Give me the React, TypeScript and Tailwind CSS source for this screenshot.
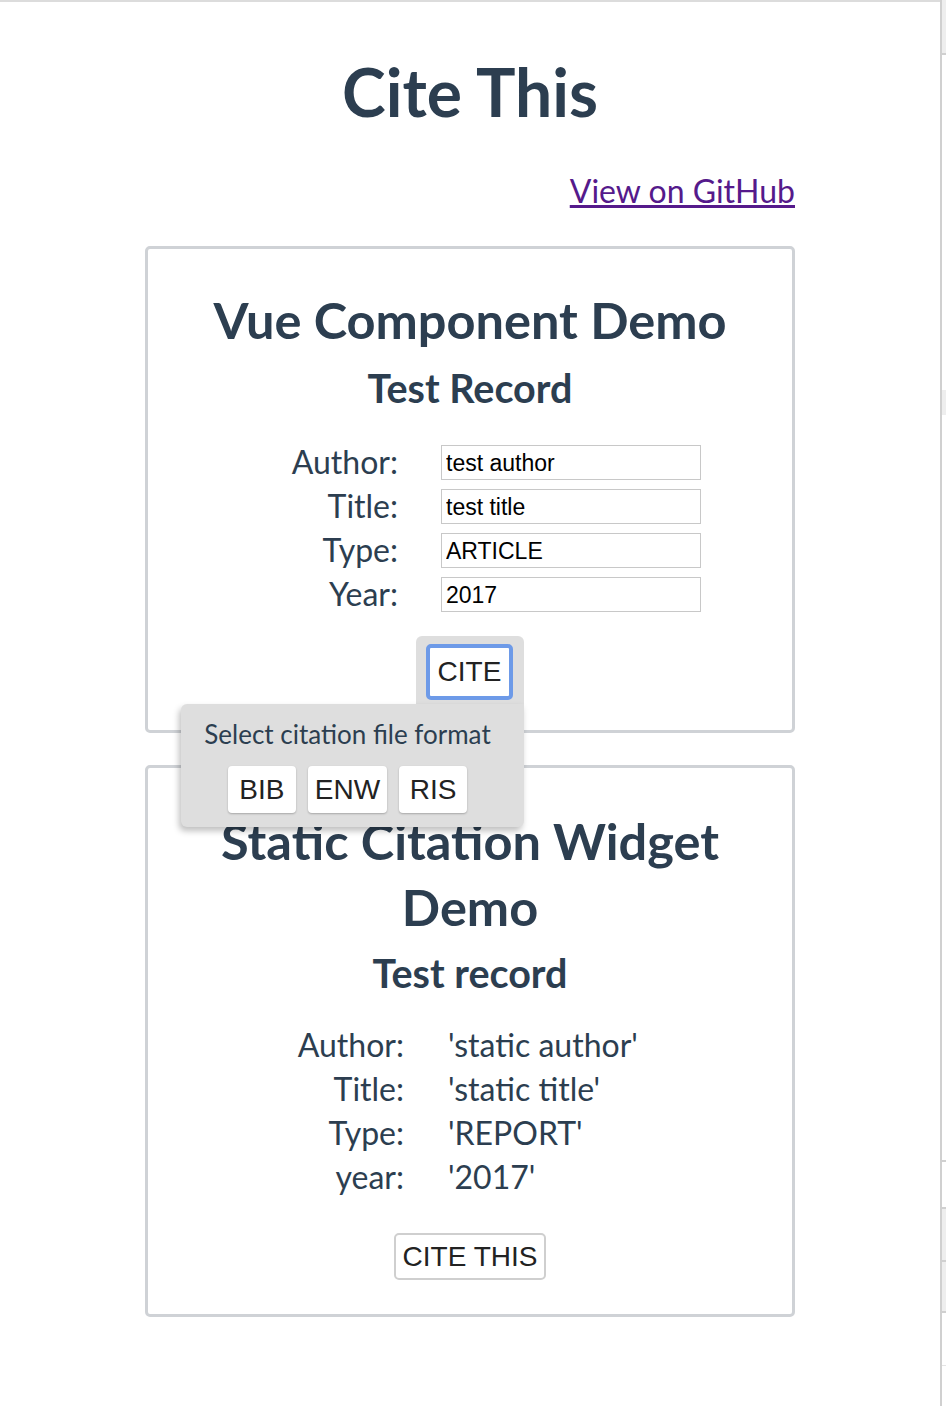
import React from "react";

const sans = "font-['Lato','Noto_Sans',sans-serif]";
const ui = "font-['Liberation_Sans','Arial',sans-serif]";

function Row({ label, children }: { label: string; children: React.ReactNode }) {
  return (
    <>
      <span className="text-right text-[32px] leading-[44px]">{label}</span>
      <div className="flex items-center">{children}</div>
    </>
  );
}

function CitePopup() {
  return (
    <div className="relative mt-[20px] flex justify-center">
      <div className="relative rounded-t-[6px] bg-[#dedede] pt-[8px] pr-[11px] pb-[4px] pl-[10px]">
        <button
          className={`${ui} h-[56px] w-[87px] rounded-[5px] border-[4px] border-[#6d9ae8] bg-white text-[28px] text-[#222]`}
        >
          CITE
        </button>
        <div className="absolute right-0 top-full z-10 w-[343px] rounded-[6px] rounded-tr-none bg-[#dedede] pt-[13px] pb-[14px] shadow-[-2px_4px_6px_rgba(0,0,0,0.25)]">
          <p className="pr-[10px] text-center text-[26px] leading-[34px] text-[#2c3e50]">
            Select citation file format
          </p>
          <div className="mt-[15px] flex justify-center gap-[12px] pr-[10px]">
            {["BIB", "ENW", "RIS"].map((f) => (
              <button
                key={f}
                className={`${ui} h-[47px] min-w-[68px] rounded-[4px] bg-white px-[7px] text-[28px] text-[#222] shadow-[0_1px_2px_rgba(0,0,0,0.25)]`}
              >
                {f}
              </button>
            ))}
          </div>
        </div>
      </div>
    </div>
  );
}

export default function App() {
  return (
    <div className={`${sans} flex min-h-[1406px] bg-white text-[#2c3e50]`}>
      <div className="w-[940px] border-t-2 border-[#dcdcdc]">
        <h1 className="mt-[50px] text-center text-[66px] font-bold leading-[80px]">Cite This</h1>
        <div className="mx-auto mt-[39px] flex w-[650px] justify-end">
          <a href="#" className="text-[32px] leading-[40px] text-[#551a8b] underline">
            View on GitHub
          </a>
        </div>

        <section className="mx-auto mt-[35px] w-[650px] rounded-[5px] border-[3px] border-[#cfd2d6] pb-[26px]">
          <h2 className="mt-[41px] text-center text-[50.5px] font-bold leading-[60px]">Vue Component Demo</h2>
          <h3 className="mt-[15px] text-center text-[39.5px] font-bold leading-[46px]">Test Record</h3>
          <div className="mt-[29px] grid grid-cols-[250px_260px] gap-x-[43px]">
            {[
              ["Author:", "test author"],
              ["Title:", "test title"],
              ["Type:", "ARTICLE"],
              ["Year:", "2017"],
            ].map(([l, v]) => (
              <Row key={l} label={l}>
                <input
                  readOnly
                  value={v}
                  className={`${ui} h-[35px] w-[260px] border border-[#c8c8c8] px-[4px] pt-[2px] text-[23px] text-black outline-none`}
                />
              </Row>
            ))}
          </div>
          <CitePopup />
        </section>

        <section className="mx-auto mt-[32px] w-[650px] rounded-[5px] border-[3px] border-[#cfd2d6] pb-[34px]">
          <h2 className="mt-[40px] px-[60px] text-center text-[50.5px] font-bold leading-[66px]">
            Static Citation Widget Demo
          </h2>
          <h3 className="mt-[10px] text-center text-[39.5px] font-bold leading-[46px]">Test record</h3>
          <div className="mt-[27px] grid grid-cols-[256px_auto] gap-x-[44px]">
            {[
              ["Author:", "'static author'"],
              ["Title:", "'static title'"],
              ["Type:", "'REPORT'"],
              ["year:", "'2017'"],
            ].map(([l, v]) => (
              <Row key={l} label={l}>
                <span className="text-[32px] leading-[44px]">{v}</span>
              </Row>
            ))}
          </div>
          <div className="mt-[34px] flex justify-center">
            <button
              className={`${ui} h-[47px] rounded-[5px] border-2 border-[#cfcfcf] bg-white px-[7px] text-[28px] text-[#222]`}
            >
              CITE THIS
            </button>
          </div>
        </section>
      </div>

      <div className="flex w-[6px] flex-col border-l-2 border-[#d0d0d0]">
        <div className="h-[55px] border-b-2 border-[#d0d0d0] bg-[#eeeeee]" />
        <div className="mt-[335px] h-[25px] bg-[#eeeeee]" />
        <div className="mt-[745px] h-[2px] bg-[#d0d0d0]" />
        <div className="mt-[45px] h-[53px] border-t-2 border-[#d0d0d0] bg-[#eeeeee]" />
        <div className="h-[53px] border-t-2 border-b-2 border-[#d0d0d0] bg-[#eeeeee]" />
        <div className="mt-[52px] h-[1px] bg-[#e4e4e4]" />
      </div>
    </div>
  );
}
